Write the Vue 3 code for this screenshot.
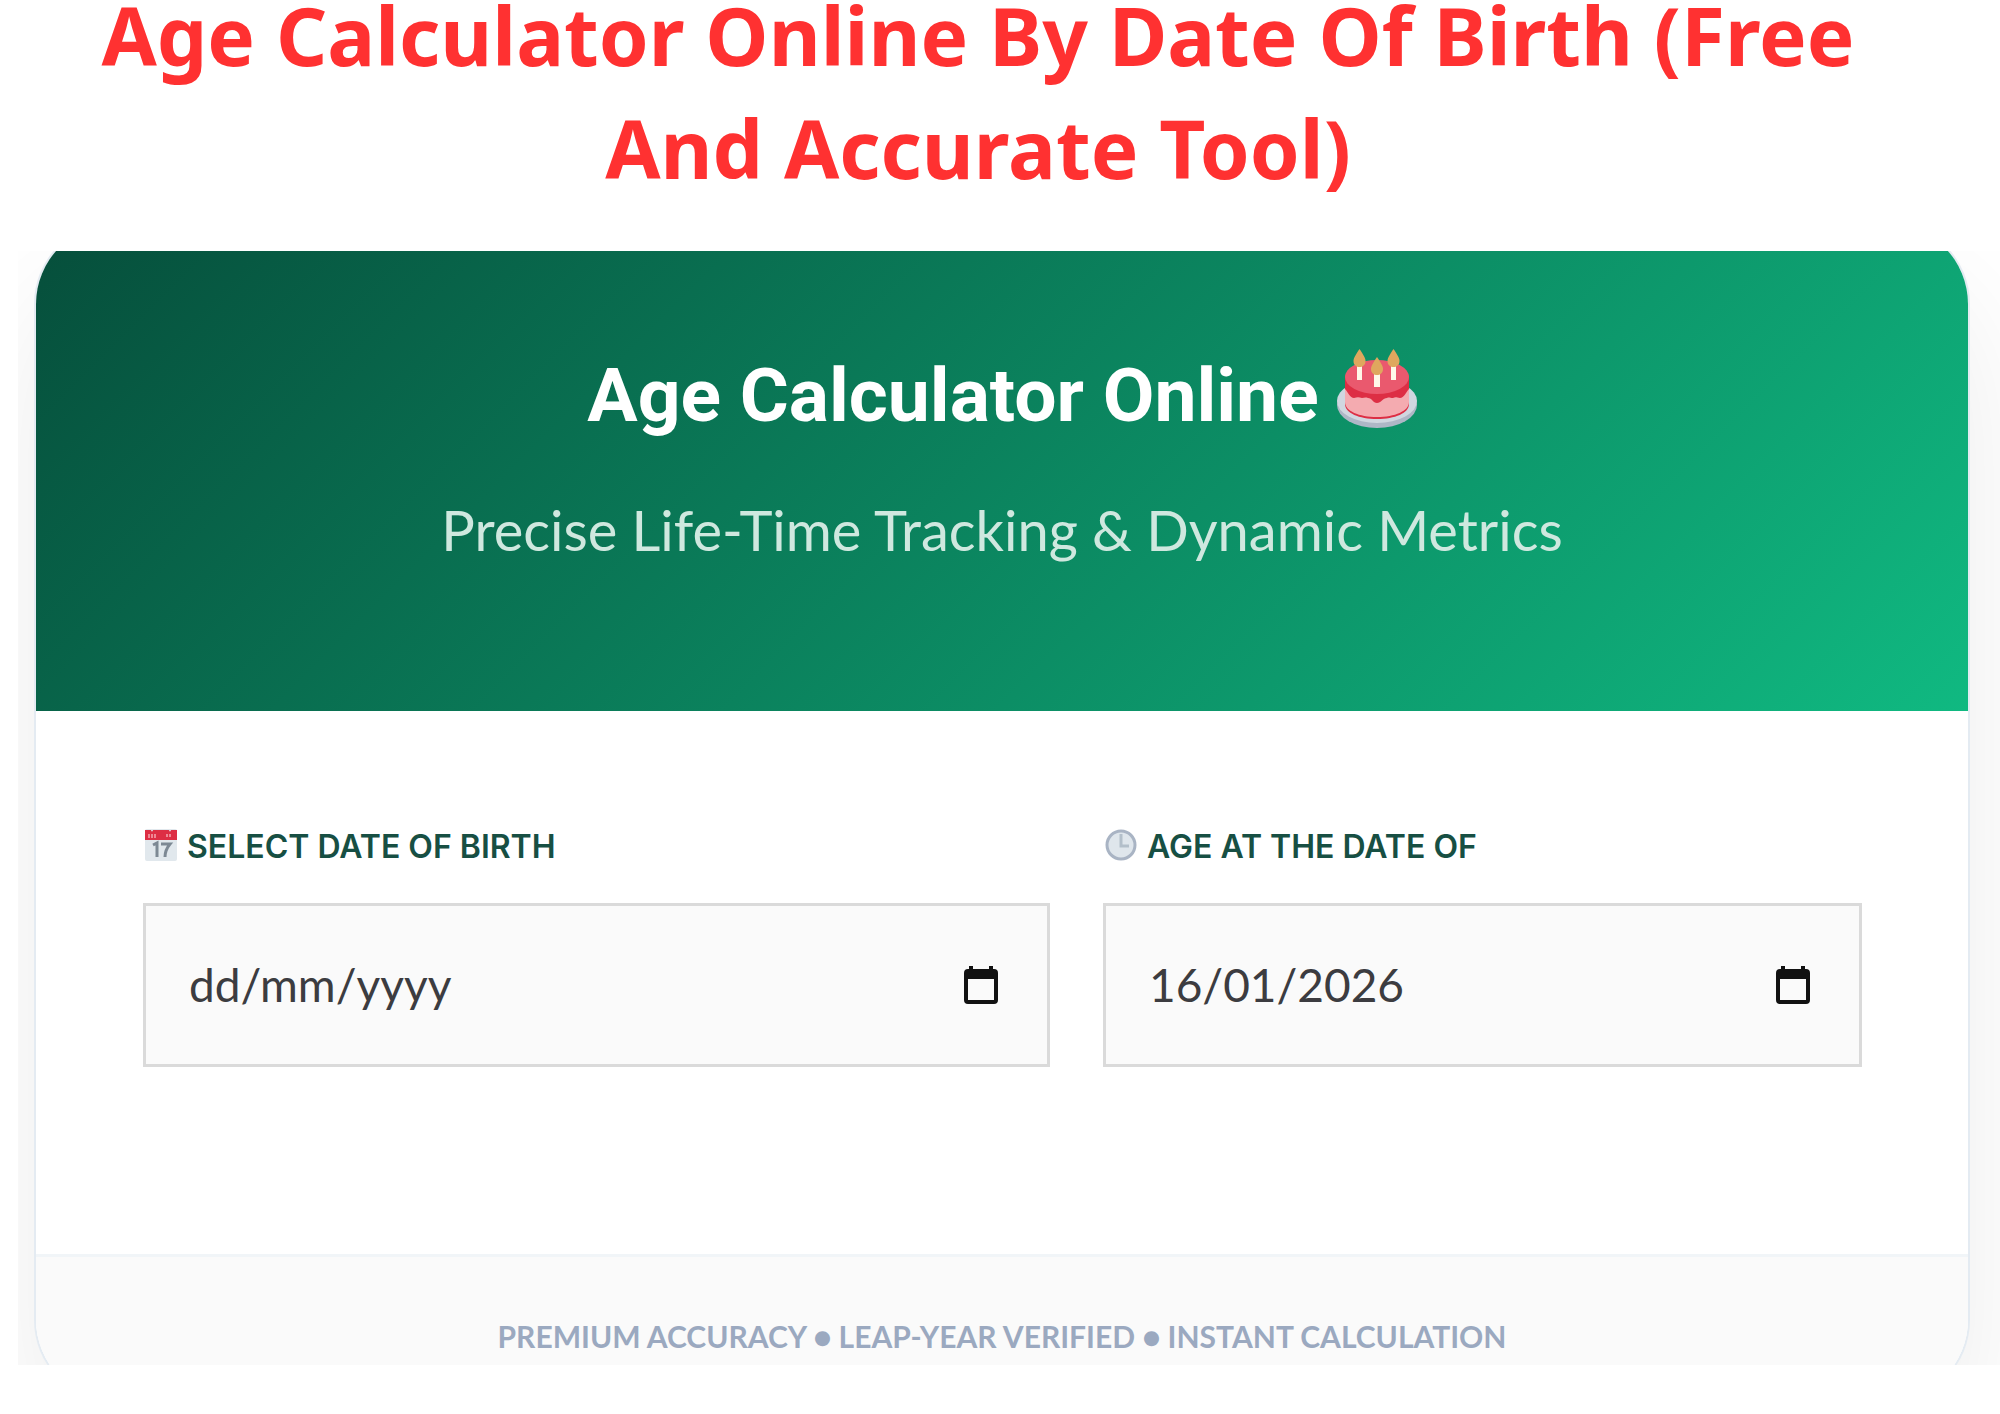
<script setup>
import { ref } from 'vue'

const birthDate = ref('')
const targetDate = ref('16/01/2026')
</script>

<template>
  <main class="page">
    <h1 class="title">Age Calculator Online By Date Of Birth (Free<br />And Accurate Tool)</h1>

    <section class="stage">
      <article class="card">
        <header class="hero">
          <h2 class="hero-title">
            <span>Age Calculator Online</span>
            <svg class="cake" viewBox="0 0 80 80" aria-hidden="true">
              <ellipse cx="40" cy="56" rx="40" ry="23" fill="#aeb7c6" />
              <ellipse cx="40" cy="52" rx="40" ry="22" fill="#d0d7e0" />
              <path d="M8 26v29c0 9 14 15 32 15s32-6 32-15V26z" fill="#dd2e44" />
              <path d="M8 40v13c0 9 14 15 32 15s32-6 32-15V40c-3 3-5 9-9 9-4-1-5-1-7 0-3 0-4-1-6 0-4 0-6 5-10 5s-5-5-9-5c-3-1-4 0-6 0-3-1-5-1-8 0-4 0-6-6-9-9z" fill="#f4abb0" />
              <ellipse cx="40" cy="28" rx="32" ry="17" fill="#ea596e" />
              <path d="M20 15h5v16h-5zM37 22h6v16h-6zM54 15h5v16h-5z" fill="#fff8e8" />
              <path d="M22.500 0c4 6 6 9 6 12 0 4-3 6-6 6s-6-2-6-6c0-3 2-6 6-12zM40 8c4 6 6 9 6 12 0 4-3 6-6 6s-6-2-6-6c0-3 2-6 6-12zM56.500 0c4 6 6 9 6 12 0 4-3 6-6 6s-6-2-6-6c0-3 2-6 6-12z" fill="#dfa75e" />
            </svg>
          </h2>
          <p class="hero-sub">Precise Life-Time Tracking &amp; Dynamic Metrics</p>
        </header>

        <form class="fields" @submit.prevent>
          <div class="field">
            <label class="label" for="birth">
              <svg class="label-icon" viewBox="0 0 32 32" aria-hidden="true">
                <rect width="32" height="32" rx="2" fill="#e1e8ed" />
                <path d="M0 11V1h6q1 3 2 0h16q1 3 2 0h6v10z" fill="#dd2e44" />
                <path d="M4 5v4m3-4v4m3-4v4m12-4v3m3-3v3" stroke="#ee8794" stroke-width="2" />
                <path d="M8 16l4-2v14M16 15h9q-5 6-5 13" fill="none" stroke="#7d8994" stroke-width="3" />
              </svg>
              <span>SELECT DATE OF BIRTH</span>
            </label>
            <div class="control">
              <input id="birth" v-model="birthDate" class="input" type="text" placeholder="dd/mm/yyyy" />
              <button class="picker" type="button" aria-label="Pick date of birth">
                <svg viewBox="0 0 34 40" aria-hidden="true">
                  <path fill-rule="evenodd" d="M5 1h4v3h16V1h4v3h1q4 0 4 4v27q0 4-4 4H4q-4 0-4-4V8q0-4 4-4h1zM4 14v21h26V14z" fill="#111" />
                </svg>
              </button>
            </div>
          </div>

          <div class="field">
            <label class="label" for="target">
              <svg class="label-icon" viewBox="0 0 32 32" aria-hidden="true">
                <circle cx="16" cy="16" r="14" fill="#dfe6ec" stroke="#a9b4c4" stroke-width="3" />
                <path d="M16 5v12h8" fill="none" stroke="#b3bfca" stroke-width="3" />
              </svg>
              <span>AGE AT THE DATE OF</span>
            </label>
            <div class="control">
              <input id="target" v-model="targetDate" class="input" type="text" placeholder="dd/mm/yyyy" />
              <button class="picker" type="button" aria-label="Pick target date">
                <svg viewBox="0 0 34 40" aria-hidden="true">
                  <path fill-rule="evenodd" d="M5 1h4v3h16V1h4v3h1q4 0 4 4v27q0 4-4 4H4q-4 0-4-4V8q0-4 4-4h1zM4 14v21h26V14z" fill="#111" />
                </svg>
              </button>
            </div>
          </div>
        </form>

        <footer class="foot">PREMIUM ACCURACY ● LEAP-YEAR VERIFIED ● INSTANT CALCULATION</footer>
      </article>
    </section>
  </main>
</template>

<style>
body {
  margin: 0;
  background: #fff;
}
</style>

<style scoped>
.page {
  overflow: hidden;
  padding-bottom: 50px;
}
.title {
  margin: -22px 44px 0 0;
  font: 700 80px/113px "Noto Sans", sans-serif;
  color: #ff3131;
  text-align: center;
}
.stage {
  margin: 47px 0 0 18px;
  overflow: hidden;
}
.card {
  margin: -27px 32px -35px 18px;
  box-sizing: border-box;
  background: #fff;
  border-radius: 80px;
  box-shadow: 0 0 0 2px #e4ebf2, 0 66px 132px rgba(0, 0, 0, 0.08);
  overflow: hidden;
}
.hero {
  display: flex;
  flex-direction: column;
  align-items: center;
  gap: 40px;
  padding: 124px 40px 133px;
  background: linear-gradient(135deg, #064e3b 0%, #10b981 100%);
  text-align: center;
}
.hero-title {
  display: flex;
  align-items: center;
  gap: 18px;
  margin: 0;
  font: 700 75px/94px Roboto, sans-serif;
  color: #fff;
}
.cake {
  width: 80px;
  height: 80px;
  margin-bottom: 12px;
}
.hero-sub {
  margin: 0;
  font: 400 56px/96px Lato, sans-serif;
  color: #cfe8df;
}
.fields {
  display: grid;
  grid-template-columns: 907fr 759fr;
  gap: 53px;
  padding: 116px 106px 187px 107px;
}
.field {
  display: flex;
  flex-direction: column;
  gap: 36px;
  min-width: 0;
}
.label {
  display: flex;
  align-items: center;
  gap: 10px;
  font: 600 32px/40px Inter, sans-serif;
  color: #174f43;
}
.label-icon {
  width: 32px;
  height: 32px;
  margin: 0 0 4px 2px;
}
.control {
  display: flex;
  align-items: center;
  height: 158px;
  padding: 0 49px 0 43px;
  border: 3px solid #dadada;
  background: #fafafa;
}
.input {
  flex: 1;
  min-width: 0;
  padding: 0;
  border: 0;
  outline: 0;
  background: transparent;
  font: 400 46px/60px Lato, sans-serif;
  color: #3c3c40;
}
.input::placeholder {
  color: #3c3c40;
  opacity: 1;
}
.picker {
  width: 34px;
  height: 40px;
  padding: 0;
  border: 0;
  background: transparent;
}
.picker svg {
  display: block;
  width: 34px;
  height: 40px;
}
.foot {
  padding: 57px 40px 42px;
  border-top: 3px solid #f1f5f8;
  background: #fafafa;
  font: 700 30px/44px Lato, sans-serif;
  color: #9ba9c0;
  text-align: center;
}
</style>
